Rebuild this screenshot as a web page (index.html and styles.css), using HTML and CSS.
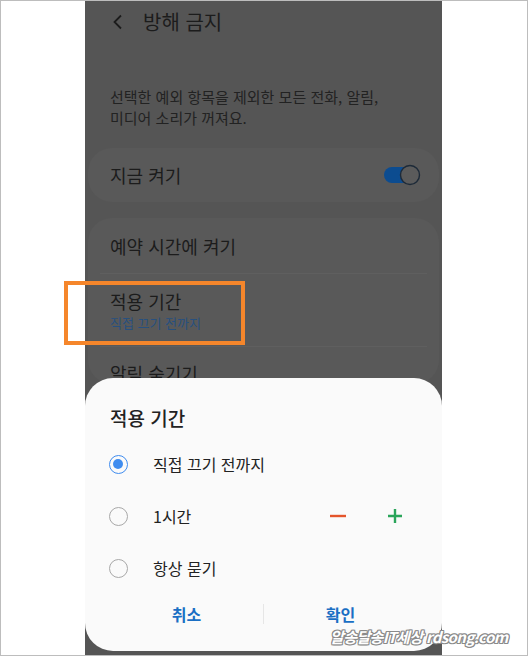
FILE: index.html
```html
<!DOCTYPE html>
<html lang="ko">
<head>
    <meta charset="UTF-8">
    <meta name="viewport" content="width=device-width, initial-scale=1.0">
    <title>방해 금지</title>
    <link rel="stylesheet" href="styles.css">
</head>
<body>
    <div class="frame">
        <div class="phone">
            <div class="header">
                <svg class="back" width="12" height="16" viewBox="0 0 12 16">
                    <path d="M9 1.5 L2.5 8 L9 14.5" fill="none" stroke="#1c1c1c" stroke-width="1.8"/>
                </svg>
                <span class="title">방해 금지</span>
            </div>

            <p class="desc">선택한 예외 항목을 제외한 모든 전화, 알림,<br>미디어 소리가 꺼져요.</p>

            <div class="card card-now">
                <span class="row-title">지금 켜기</span>
                <svg class="toggle" width="38" height="24" viewBox="0 0 38 24">
                    <rect x="1" y="4" width="30" height="16" rx="8" fill="#0c4c90"/>
                    <circle cx="27" cy="12" r="9.5" fill="#5b5b5b" stroke="#1d2a38" stroke-width="1.4"/>
                </svg>
            </div>

            <div class="card">
                <div class="row row-first">
                    <span class="row-title">예약 시간에 켜기</span>
                </div>
                <div class="row row-period">
                    <span class="row-title">적용 기간</span>
                    <span class="row-sub">직접 끄기 전까지</span>
                </div>
                <div class="row row-last">
                    <span class="row-title">알림 숨기기</span>
                </div>
            </div>

            <div class="sheet">
                <div class="sheet-title">적용 기간</div>
                <div class="option">
                    <span class="radio checked"></span>
                    <span class="option-text">직접 끄기 전까지</span>
                </div>
                <div class="option">
                    <span class="radio"></span>
                    <span class="option-text">1시간</span>
                    <div class="steppers">
                        <svg width="18" height="18" viewBox="0 0 18 18">
                            <path d="M1 9 H17" stroke="#e4552b" stroke-width="2.4"/>
                        </svg>
                        <svg width="16" height="16" viewBox="0 0 16 16">
                            <path d="M1 8 H15 M8 1 V15" stroke="#2aa55a" stroke-width="2.4"/>
                        </svg>
                    </div>
                </div>
                <div class="option">
                    <span class="radio"></span>
                    <span class="option-text">항상 묻기</span>
                </div>
                <div class="buttons">
                    <span class="btn">취소</span>
                    <span class="btn-sep"></span>
                    <span class="btn">확인</span>
                </div>
            </div>
        </div>

        <div class="highlight"></div>
        <div class="watermark">알송달송IT세상 rdsong.com</div>
    </div>
</body>
</html>
```

FILE: styles.css
```css
body{
    margin: 0;
    font-family: "Noto Sans CJK KR", "Noto Sans", sans-serif;
}
.frame{
    position: relative;
    width: 528px;
    height: 656px;
    box-sizing: border-box;
    border: 1px solid #bdbdbd;
    background: #fff;
    padding-left: 84px;
}
.phone{
    position: relative;
    width: 357px;
    height: 654px;
    background: #555555;
    overflow: hidden;
    color: #1c1c1c;
}
.header{
    height: 42px;
    display: flex;
    align-items: center;
    padding-left: 27px;
}
.back{
    margin-right: 19px;
}
.title{
    font-size: 20px;
    line-height: 24px;
}
.desc{
    margin: 43px 0 0 25px;
    font-size: 15px;
    line-height: 21px;
    color: #222;
}
.card{
    margin: 20px 3px 0 3px;
    background: #595959;
    border-radius: 24px;
}
.card-now{
    height: 54px;
    display: flex;
    align-items: center;
    justify-content: space-between;
    padding: 0 18px 0 22px;
}
.card-now + .card{
    margin-top: 16px;
}
.row-title{
    font-size: 18px;
    line-height: 22px;
}
.row{
    display: flex;
    flex-direction: column;
    padding-left: 22px;
    position: relative;
}
.row-first{
    height: 55px;
    justify-content: center;
    border-bottom: 1px solid #5f5f5f;
    margin: 0 12px;
    padding-left: 10px;
}
.row-period{
    height: 73px;
    padding-top: 16px;
    box-sizing: border-box;
    border-bottom: 1px solid #5f5f5f;
    margin: 0 12px;
    padding-left: 10px;
}
.row-sub{
    font-size: 13px;
    line-height: 18px;
    margin-top: 2px;
    color: #27507f;
}
.row-last{
    padding-top: 15px;
}
.sheet{
    position: absolute;
    left: 0;
    right: 0;
    top: 377px;
    height: 273px;
    background: #fafafa;
    border-radius: 28px;
    padding: 28px 25px 0 25px;
    box-sizing: border-box;
}
.sheet-title{
    font-size: 19px;
    font-weight: 500;
    line-height: 24px;
    color: #222;
    margin-bottom: 8px;
}
.option{
    height: 52px;
    display: flex;
    align-items: center;
}
.radio{
    width: 19px;
    height: 19px;
    border-radius: 50%;
    border: 1px solid #a8a8a8;
    box-sizing: border-box;
    margin-left: -1px;
    position: relative;
}
.radio.checked{
    border: 1.5px solid #3f8cef;
}
.radio.checked::after{
    content: "";
    position: absolute;
    left: 3px;
    top: 3px;
    width: 10px;
    height: 10px;
    border-radius: 50%;
    background: #3f8cef;
}
.option-text{
    margin-left: 25px;
    font-size: 16px;
    color: #222;
}
.steppers{
    margin-left: auto;
    margin-right: 14px;
    display: flex;
    align-items: center;
    gap: 40px;
}
.buttons{
    height: 40px;
    display: flex;
    align-items: center;
}
.btn{
    flex: 1;
    text-align: center;
    font-size: 16px;
    font-weight: 700;
    color: #1a6fc4;
}
.btn-sep{
    width: 1px;
    height: 20px;
    background: #e6e6e6;
}
.highlight{
    position: absolute;
    left: 63px;
    top: 280px;
    width: 181px;
    height: 64px;
    box-sizing: border-box;
    border: 4px solid #f5862b;
}
.watermark{
    position: absolute;
    left: 329px;
    top: 626px;
    font-size: 15px;
    line-height: 20px;
    font-weight: 700;
    font-style: italic;
    letter-spacing: -0.6px;
    color: #fff;
    text-shadow: 1px 0 #8a8a8a, -1px 0 #8a8a8a, 0 1px #8a8a8a, 0 -1px #8a8a8a,
        1px 1px #8a8a8a, -1px -1px #8a8a8a, 1px -1px #8a8a8a, -1px 1px #8a8a8a;
    white-space: nowrap;
}
```
